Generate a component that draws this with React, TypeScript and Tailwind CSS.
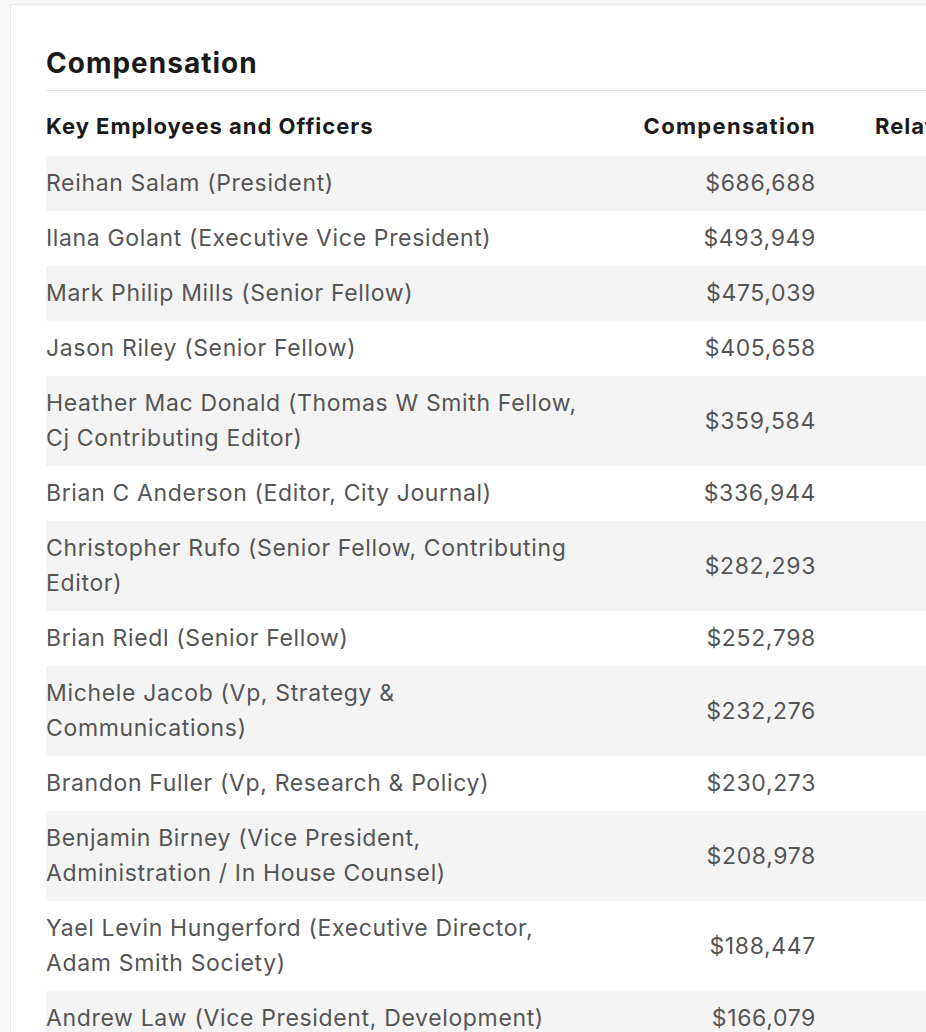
const rows: [string, string][] = [
  ["Reihan Salam (President)", "$686,688"],
  ["Ilana Golant (Executive Vice President)", "$493,949"],
  ["Mark Philip Mills (Senior Fellow)", "$475,039"],
  ["Jason Riley (Senior Fellow)", "$405,658"],
  ["Heather Mac Donald (Thomas W Smith Fellow, Cj Contributing Editor)", "$359,584"],
  ["Brian C Anderson (Editor, City Journal)", "$336,944"],
  ["Christopher Rufo (Senior Fellow, Contributing Editor)", "$282,293"],
  ["Brian Riedl (Senior Fellow)", "$252,798"],
  ["Michele Jacob (Vp, Strategy & Communications)", "$232,276"],
  ["Brandon Fuller (Vp, Research & Policy)", "$230,273"],
  ["Benjamin Birney (Vice President, Administration / In House Counsel)", "$208,978"],
  ["Yael Levin Hungerford (Executive Director, Adam Smith Society)", "$188,447"],
  ["Andrew Law (Vice President, Development)", "$166,079"],
];

const App = () => {
  return (
    <main className="min-h-screen bg-[#f8f8f8] pt-1 pl-[10px] overflow-hidden font-['Inter',sans-serif]">
      <section className="w-[1200px] bg-white border border-[#e6e6e6] pl-[35px] pt-[41px] pb-10">
        <h2 className="text-[28px] leading-[34px] font-bold tracking-[1px] text-[#1a1a1a] pb-[10px] border-b border-[#e4e4e4]">
          Compensation
        </h2>
        <table className="w-full border-collapse table-fixed">
          <thead>
            <tr className="text-[22px] leading-[35px] font-bold tracking-[1px] text-[#1a1a1a]">
              <th className="w-[590px] text-left pt-[18px] pb-[12px] pl-0 pr-[54px]">Key Employees and Officers</th>
              <th className="w-[210px] text-right pt-[18px] pb-[12px] pr-[30px] tracking-[1.3px]">Compensation</th>
              <th className="text-left pt-[18px] pb-[12px] pl-[29px]">Related</th>
            </tr>
          </thead>
          <tbody className="text-[23px] leading-[35px] tracking-[0.65px] text-[#555]">
            {rows.map(([name, pay], i) => (
              <tr key={name} className={i % 2 === 0 ? "bg-[#f4f4f4]" : "bg-white"}>
                <td className="py-[10px] pr-[54px]">{name}</td>
                <td className="text-right pr-[30px]">{pay}</td>
                <td></td>
              </tr>
            ))}
          </tbody>
        </table>
      </section>
    </main>
  );
};

export default App;
